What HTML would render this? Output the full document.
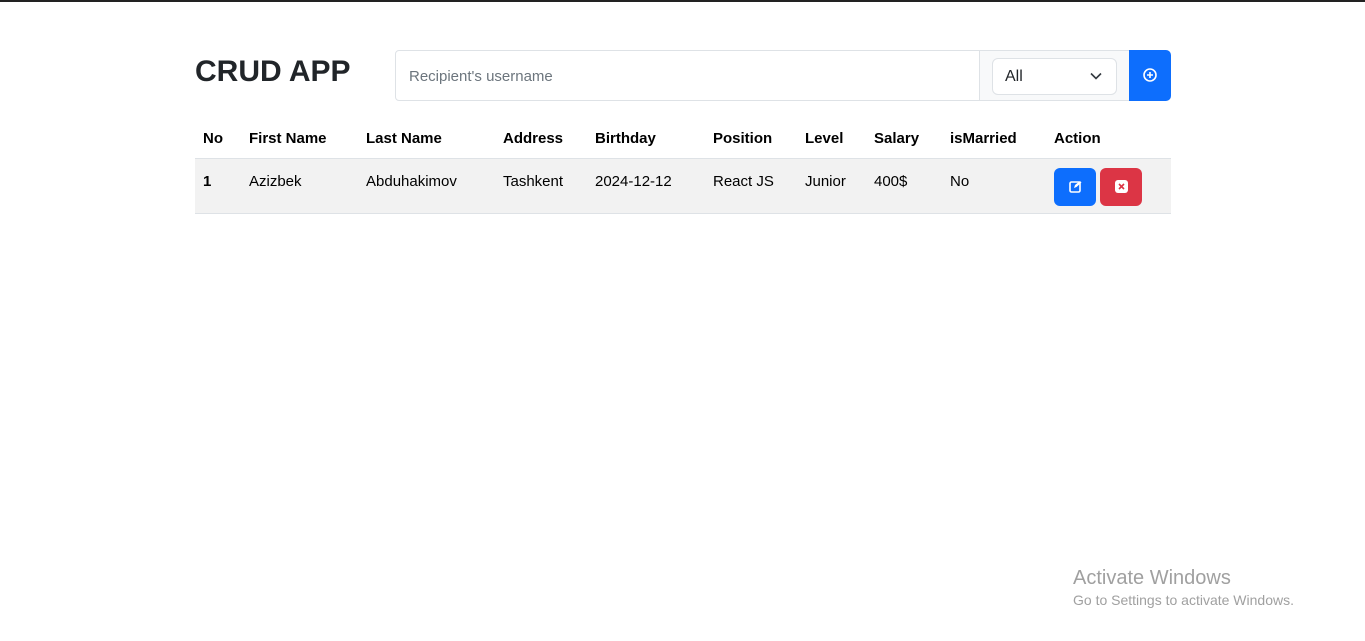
<!DOCTYPE html>
<html><head><style>
body{margin:0;width:1365px;height:641px;background:#fff;font-family:"Liberation Sans",sans-serif;color:#212529;position:relative;overflow:hidden}
.top{position:absolute;left:0;top:0;width:1365px;height:2px;background:#222}
.abs{position:absolute}
h1{position:absolute;left:195px;top:53px;margin:0;font-size:30px;font-weight:600;line-height:38px}
.ig{left:395px;top:50px;width:776px;height:51px}
.inp{position:absolute;left:0;top:0;width:570px;height:49px;border:1px solid #dee2e6;border-radius:4px 0 0 4px;font-size:15px;color:#6c757d;line-height:51px;padding-left:13px}
.sw{position:absolute;left:584px;top:0;width:149px;height:49px;background:#f8f9fa;border:1px solid #dee2e6}
.sel{position:absolute;left:12px;top:7px;width:125px;height:37px;background:#fff;border:1px solid #dee2e6;border-radius:6px;font-size:16px;line-height:35px;padding-left:12px;box-sizing:border-box}
.btn{position:absolute;left:734px;top:0;width:42px;height:51px;background:#0d6efd;border-radius:0 5px 5px 0}
table{position:absolute;left:195px;top:118px;width:976px;border-collapse:collapse;font-size:15px;table-layout:fixed;color:#000}
th{text-align:left;font-weight:bold;height:40px;padding:2px 0 0 8px;box-sizing:border-box;border-bottom:1px solid #dee2e6;white-space:nowrap}
td{height:55px;padding:0 0 0 8px;vertical-align:top;padding-top:14px;box-sizing:border-box;background:#f2f2f2;border-bottom:1px solid #dee2e6;white-space:nowrap}
.b{display:inline-block;width:42px;height:38px;border-radius:6px;vertical-align:top;margin-top:-5px;position:relative}
</style></head><body>
<div class="top"></div>
<h1>CRUD APP</h1>
<div class="abs ig">
<div class="inp">Recipient's username</div>
<div class="sw"><div class="sel">All<svg style="position:absolute;right:14px;top:13px" width="12" height="8" viewBox="0 0 12 8"><path d="M1 1.5l5 5 5-5" stroke="#343a40" stroke-width="1.6" fill="none"/></svg></div></div>
<div class="btn"><svg style="position:absolute;left:14px;top:18px" width="14" height="14" viewBox="0 0 14 14"><circle cx="7" cy="7" r="6" stroke="#fff" stroke-width="1.6" fill="none"/><path d="M7 4v6M4 7h6" stroke="#fff" stroke-width="1.6"/></svg></div>
</div>
<table>
<colgroup><col style="width:46px"><col style="width:117px"><col style="width:137px"><col style="width:92px"><col style="width:118px"><col style="width:92px"><col style="width:69px"><col style="width:76px"><col style="width:104px"><col style="width:125px"></colgroup>
<tr><th>No</th><th>First Name</th><th>Last Name</th><th>Address</th><th>Birthday</th><th>Position</th><th>Level</th><th>Salary</th><th>isMarried</th><th>Action</th></tr>
<tr><td><b>1</b></td><td>Azizbek</td><td>Abduhakimov</td><td>Tashkent</td><td>2024-12-12</td><td>React JS</td><td>Junior</td><td>400$</td><td>No</td><td>
<span class="b" style="background:#0d6efd"><svg style="position:absolute;left:15px;top:12px" width="13" height="13" viewBox="0 0 13 13"><rect x="1" y="2" width="10" height="10" rx="1.5" stroke="#fff" stroke-width="1.6" fill="none"/><path d="M5 8l1-3 5-4 1.5 1.5-5 4.5z" fill="#fff"/></svg></span><span class="b" style="background:#dc3545;margin-left:4px"><svg style="position:absolute;left:15px;top:12px" width="13" height="13" viewBox="0 0 13 13"><rect x="0" y="0" width="13" height="13" rx="3" fill="#fff"/><path d="M4 4l5 5M9 4l-5 5" stroke="#dc3545" stroke-width="1.6"/></svg></span>
</td></tr>
</table>
<div class="abs" style="left:1073px;top:567px;font-size:20px;color:#a0a0a0">Activate Windows</div>
<div class="abs" style="left:1073px;top:592px;font-size:14px;color:#a0a0a0">Go to Settings to activate Windows.</div>
</body></html>
